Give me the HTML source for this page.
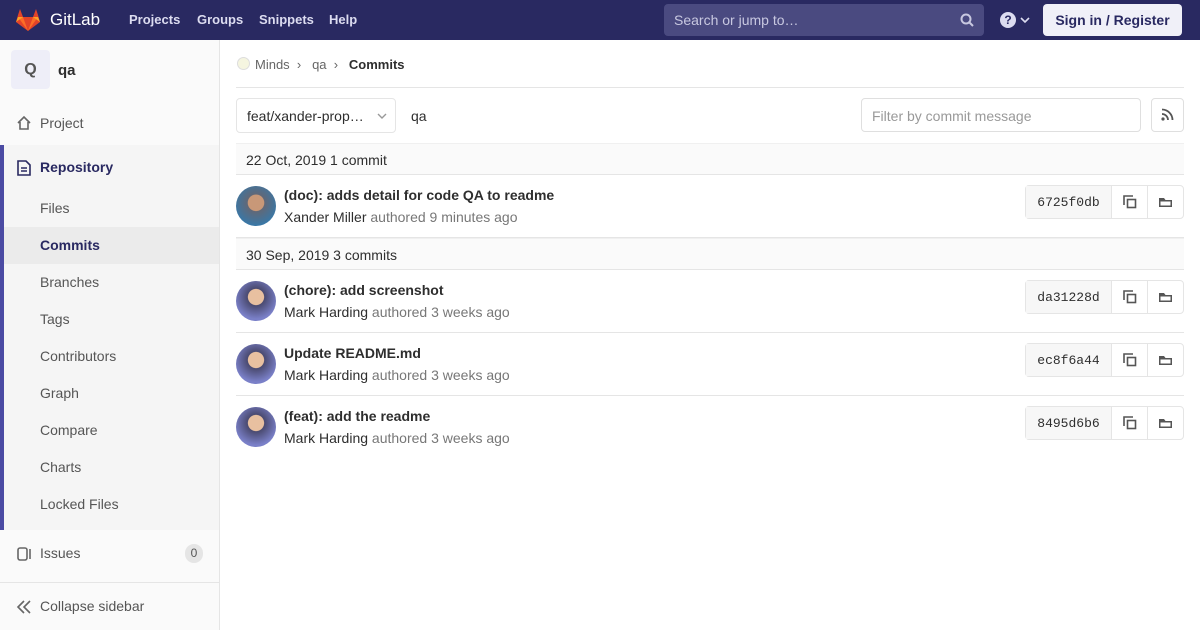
<!DOCTYPE html><html><head><style>
*{box-sizing:border-box;margin:0;padding:0}
body{width:1200px;height:630px;overflow:hidden;font-family:"Liberation Sans",sans-serif;font-size:14px;color:#2e2e2e;background:#fff;position:relative}
.nav{position:absolute;top:0;left:0;width:1200px;height:40px;background:#292961;color:#fff}
.nav a{position:absolute;top:12px;font-size:13px;font-weight:bold;color:#dcdcf0}
.side{position:absolute;top:40px;left:0;width:220px;height:590px;background:#fafafa;border-right:1px solid #e5e5e5}
.si{position:absolute;left:40px;font-size:14px;color:#555}
.abs{position:absolute}
.date{position:absolute;left:236px;width:948px;height:32px;background:#fafafa;border-top:1px solid #f0f0f0;border-bottom:1px solid #e5e5e5;padding:8px 10px;font-size:14px}
.row{position:absolute;left:236px;width:948px;height:63px;border-bottom:1px solid #e5e5e5}
.av{position:absolute;left:0;top:11px;width:40px;height:40px;border-radius:50%;background:radial-gradient(circle at 50% 40%,#e8c0a0 0 25%,#4a4a70 27%,#7a80c8 70%)}
.t{position:absolute;left:48px;top:12px;font-weight:bold;font-size:14px}
.m{position:absolute;left:48px;top:34px;color:#2e2e2e}
.m span{color:#777}
.sha{position:absolute;right:0;top:10px;height:34px;border:1px solid #e5e5e5;border-radius:4px;display:flex;background:#fff}
.sha div{height:32px;border-left:1px solid #e5e5e5;width:36px;display:flex;align-items:center;justify-content:center}
.sha .h{width:85px;border:0;background:#f7f7f7;font-family:"Liberation Mono",monospace;font-size:13px;color:#2e2e2e}
</style></head><body>
<div class="nav">
<svg class="abs" style="left:16px;top:9px" width="24" height="22" viewBox="0 0 24 22"><path d="M12 22L0 13 2 6 4 0 7 8h10l3-8 2 6 2 7z" fill="#e24329"/><path d="M12 22L7 8H2z" fill="#fc6d26"/><path d="M12 22l5-14h5z" fill="#fc6d26"/><path d="M0 13L2 8h5z" fill="#fca326"/><path d="M24 13l-2-5h-5z" fill="#fca326"/></svg>
<div class="abs" style="left:50px;top:10px;font-size:17px;color:#fff">GitLab</div>
<a style="left:129px">Projects</a><a style="left:197px">Groups</a><a style="left:259px">Snippets</a><a style="left:329px">Help</a>
<div class="abs" style="left:664px;top:4px;width:320px;height:32px;background:#4a4a80;border-radius:4px;color:#c8c8e0;padding:8px 10px;font-size:14px">Search or jump to…</div>
<svg class="abs" style="left:960px;top:13px" width="14" height="14"><circle cx="6" cy="6" r="4.5" stroke="#c8c8e0" stroke-width="2" fill="none"/><path d="M9 9l4 4" stroke="#c8c8e0" stroke-width="2"/></svg>
<div class="abs" style="left:1000px;top:12px;width:16px;height:16px;border-radius:50%;background:#dcdcf0;color:#292961;font-size:12px;font-weight:bold;text-align:center;line-height:16px">?</div>
<svg class="abs" style="left:1020px;top:16px" width="10" height="8"><path d="M1 2l4 4 4-4" stroke="#dcdcf0" stroke-width="1.6" fill="none"/></svg>
<div class="abs" style="left:1043px;top:4px;width:139px;height:32px;background:#f0f0f8;border-radius:4px;color:#292961;font-weight:bold;font-size:14px;text-align:center;line-height:32px">Sign in / Register</div>
</div>
<div class="side">
<div class="abs" style="left:11px;top:10px;width:39px;height:39px;background:#eeeef8;border-radius:4px;text-align:center;line-height:39px;font-weight:bold;color:#555;font-size:16px">Q</div>
<div class="abs" style="left:58px;top:22px;font-weight:bold;font-size:15px">qa</div>
<svg class="abs" style="left:16px;top:75px" width="16" height="16"><path d="M2 8L8 2l6 6M4 7v7h8V7" stroke="#666" stroke-width="1.6" fill="none"/></svg>
<div class="si" style="top:75px">Project</div>
<div class="abs" style="left:0;top:105px;width:219px;height:385px;background:#f5f5f5;border-left:4px solid #4b4ba3"></div>
<svg class="abs" style="left:17px;top:120px" width="14" height="16"><path d="M1 1h8l4 4v10H1z" stroke="#292961" stroke-width="1.6" fill="none"/><path d="M4 8h6M4 11h6" stroke="#292961" stroke-width="1.4"/></svg>
<div class="si" style="top:119px;font-weight:bold;color:#292961">Repository</div>
<div class="si" style="top:160px">Files</div>
<div class="abs" style="left:4px;top:187px;width:215px;height:37px;background:#ebebeb"></div>
<div class="si" style="top:197px;font-weight:bold;color:#292961">Commits</div>
<div class="si" style="top:234px">Branches</div>
<div class="si" style="top:271px">Tags</div>
<div class="si" style="top:308px">Contributors</div>
<div class="si" style="top:345px">Graph</div>
<div class="si" style="top:382px">Compare</div>
<div class="si" style="top:419px">Charts</div>
<div class="si" style="top:456px">Locked Files</div>
<svg class="abs" style="left:17px;top:506px" width="16" height="16"><rect x="1" y="2" width="9" height="12" rx="2" stroke="#666" stroke-width="1.6" fill="none"/><path d="M13 3v10" stroke="#666" stroke-width="1.6"/></svg>
<div class="si" style="top:505px">Issues</div>
<div class="abs" style="left:185px;top:504px;width:18px;height:19px;border-radius:9px;background:#e5e5e5;font-size:12px;text-align:center;line-height:19px;color:#555">0</div>
<div class="abs" style="left:0;top:542px;width:219px;border-top:1px solid #e5e5e5"></div>
<svg class="abs" style="left:16px;top:560px" width="16" height="14"><path d="M8 1L2 7l6 6M14 1L8 7l6 6" stroke="#666" stroke-width="1.6" fill="none"/></svg>
<div class="si" style="top:558px">Collapse sidebar</div>
</div>
<div class="abs" style="left:237px;top:57px;width:13px;height:13px;border-radius:50%;background:#f5f5e0;border:1px solid #ddd"></div>
<div class="abs" style="left:255px;top:57px;font-size:13px;color:#666">Minds &nbsp;›&nbsp; &nbsp;qa &nbsp;›&nbsp; &nbsp;<b style="color:#2e2e2e">Commits</b></div>
<div class="abs" style="left:236px;top:87px;width:948px;border-top:1px solid #e5e5e5"></div>
<div class="abs" style="left:236px;top:98px;width:160px;height:35px;border:1px solid #e5e5e5;border-radius:4px;padding:9px 10px;font-size:14px">feat/xander-prop…</div>
<svg class="abs" style="left:377px;top:112px" width="10" height="8"><path d="M1 2l4 4 4-4" stroke="#999" stroke-width="1.4" fill="none"/></svg>
<div class="abs" style="left:411px;top:108px">qa</div>
<div class="abs" style="left:861px;top:98px;width:280px;height:34px;border:1px solid #dfdfdf;border-radius:4px;padding:9px 10px;color:#999">Filter by commit message</div>
<div class="abs" style="left:1151px;top:98px;width:33px;height:34px;border:1px solid #dfdfdf;border-radius:4px"></div>
<svg class="abs" style="left:1161px;top:108px" width="13" height="13"><circle cx="2" cy="11" r="1.6" fill="#555"/><path d="M1 6a6 6 0 0 1 6 6M1 1.5a10.5 10.5 0 0 1 10.5 10.5" stroke="#555" stroke-width="1.8" fill="none"/></svg>
<div class="date" style="top:143px">22 Oct, 2019 1 commit</div>
<div class="row" style="top:175px"><div class="av" style="background:radial-gradient(circle at 50% 42%,#c89878 0 26%,#606878 28%,#3878a8 75%)"></div><div class="t">(doc): adds detail for code QA to readme</div><div class="m">Xander Miller <span>authored 9 minutes ago</span></div><div class="sha"><div class="h">6725f0db</div><div><svg width="14" height="14"><path d="M1 10V1h9" stroke="#555" stroke-width="1.6" fill="none"/><rect x="4.5" y="4.5" width="8" height="8" stroke="#555" stroke-width="1.6" fill="none"/></svg></div><div><svg width="15" height="12"><path d="M1 2h5l1.5 2H14v7H1z" fill="#555"/><rect x="2.5" y="5.5" width="10" height="4" fill="#fff"/></svg></div></div></div>
<div class="date" style="top:238px">30 Sep, 2019 3 commits</div>
<div class="row" style="top:270px"><div class="av"></div><div class="t">(chore): add screenshot</div><div class="m">Mark Harding <span>authored 3 weeks ago</span></div><div class="sha"><div class="h">da31228d</div><div><svg width="14" height="14"><path d="M1 10V1h9" stroke="#555" stroke-width="1.6" fill="none"/><rect x="4.5" y="4.5" width="8" height="8" stroke="#555" stroke-width="1.6" fill="none"/></svg></div><div><svg width="15" height="12"><path d="M1 2h5l1.5 2H14v7H1z" fill="#555"/><rect x="2.5" y="5.5" width="10" height="4" fill="#fff"/></svg></div></div></div>
<div class="row" style="top:333px"><div class="av"></div><div class="t">Update README.md</div><div class="m">Mark Harding <span>authored 3 weeks ago</span></div><div class="sha"><div class="h">ec8f6a44</div><div><svg width="14" height="14"><path d="M1 10V1h9" stroke="#555" stroke-width="1.6" fill="none"/><rect x="4.5" y="4.5" width="8" height="8" stroke="#555" stroke-width="1.6" fill="none"/></svg></div><div><svg width="15" height="12"><path d="M1 2h5l1.5 2H14v7H1z" fill="#555"/><rect x="2.5" y="5.5" width="10" height="4" fill="#fff"/></svg></div></div></div>
<div class="row" style="top:396px;border:0"><div class="av"></div><div class="t">(feat): add the readme</div><div class="m">Mark Harding <span>authored 3 weeks ago</span></div><div class="sha"><div class="h">8495d6b6</div><div><svg width="14" height="14"><path d="M1 10V1h9" stroke="#555" stroke-width="1.6" fill="none"/><rect x="4.5" y="4.5" width="8" height="8" stroke="#555" stroke-width="1.6" fill="none"/></svg></div><div><svg width="15" height="12"><path d="M1 2h5l1.5 2H14v7H1z" fill="#555"/><rect x="2.5" y="5.5" width="10" height="4" fill="#fff"/></svg></div></div></div>
</body></html>
